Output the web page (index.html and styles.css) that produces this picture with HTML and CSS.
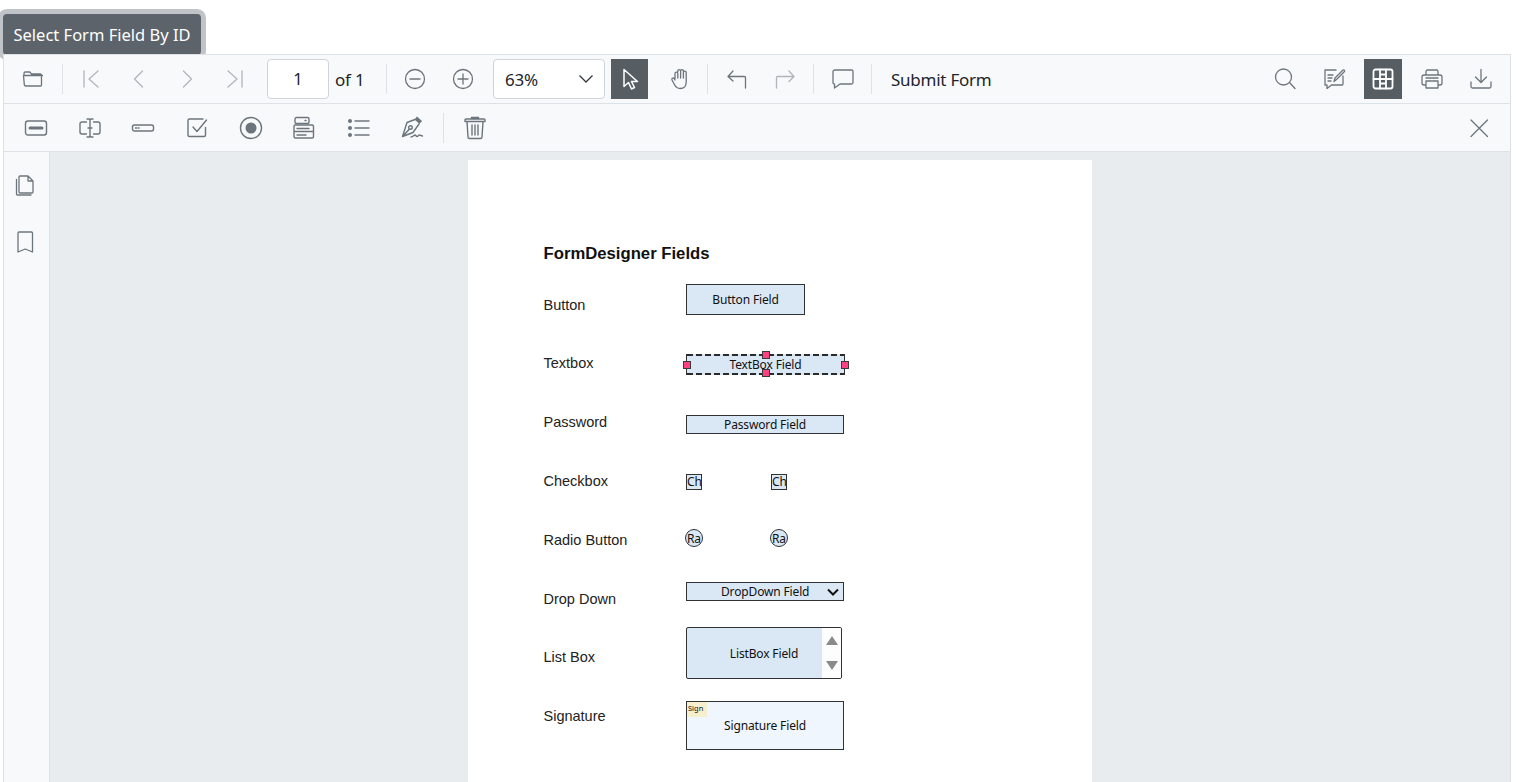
FILE: index.html
```html
<!DOCTYPE html>
<html lang="en">
<head>
<meta charset="utf-8">
<title>Form Designer</title>
<link rel="stylesheet" href="styles.css">
</head>
<body>
<div class="top"><button class="primary">Select Form Field By ID</button></div>
<div class="viewer">
  <div class="bar bar-main">
    <span class="tool first-tool"><svg viewBox="0 0 24 24"><path d="M3 8.500V6.200C3 5.500 3.500 5 4.200 5h4.600l1.700 2h8.800c.7 0 1.200.5 1.200 1.200v9.600c0 .7-.5 1.200-1.200 1.200H5c-1 0-1.600-.6-1.700-1.400L2.500 8.500h19"/></svg></span>
    <span class="sep"></span>
    <span class="tool off"><svg viewBox="0 0 24 24"><path d="M5 4v16M19 4l-9 8 9 8"/></svg></span>
    <span class="tool off"><svg viewBox="0 0 24 24"><path d="M15.500 4l-8 8 8 8"/></svg></span>
    <span class="tool off"><svg viewBox="0 0 24 24"><path d="M8.500 4l8 8-8 8"/></svg></span>
    <span class="tool off"><svg viewBox="0 0 24 24"><path d="M19 4v16M5 4l9 8-9 8"/></svg></span>
    <span class="page-input">1</span>
    <span class="of">of 1</span>
    <span class="sep"></span>
    <span class="tool"><svg viewBox="0 0 24 24"><circle cx="12" cy="12" r="9.500"/><path d="M7 12h10"/></svg></span>
    <span class="tool"><svg viewBox="0 0 24 24"><circle cx="12" cy="12" r="9.500"/><path d="M7 12h10M12 7v10"/></svg></span>
    <span class="zoom-select"><span>63%</span><svg viewBox="0 0 16 16"><path d="M1.500 4.500L8 11l6.500-6.500"/></svg></span>
    <span class="tool active pointer"><svg viewBox="0 0 24 24"><path d="M6 2.500v17l4.500-4 3 6.500 3-1.500-3-6h6z"/></svg></span>
    <span class="tool"><svg viewBox="0 0 24 24"><path d="M7 12V6.500a1.400 1.400 0 0 1 2.800 0V11m0-6.500V4a1.400 1.400 0 0 1 2.800 0v7m0-7a1.400 1.400 0 0 1 2.800 0v7m0-5.500a1.400 1.400 0 0 1 2.800 0V15c0 4-2.400 6.500-6 6.500-3 0-4.500-1.500-5.800-4L4 13c-.8-1.500 1.200-2.700 2.200-1.300L7 13"/></svg></span>
    <span class="sep sep-hand"></span>
    <span class="tool"><svg viewBox="0 0 24 24"><path d="M8 4L3 9.500 8 14M3 9.500h16.500c.6 0 1 .4 1 1V21"/></svg></span>
    <span class="tool off"><svg viewBox="0 0 24 24"><path d="M16 4l5 5.500-5 5M21 9.500H4.500c-.6 0-1 .4-1 1V21"/></svg></span>
    <span class="sep sep-left"></span>
    <span class="tool"><svg viewBox="0 0 24 24"><path d="M4 3h16.500c1 0 1.500.6 1.500 1.500v11c0 1-.5 1.500-1.500 1.500H9l-5.500 4V17c-1 0-1.500-.5-1.500-1.500v-11C2 3.600 2.800 3 4 3z"/></svg></span>
    <span class="sep sep-left"></span>
    <span class="submit">Submit Form</span>
    <span class="spacer"></span>
    <span class="tool"><svg viewBox="0 0 24 24"><circle cx="10.500" cy="10" r="8"/><path d="M16.500 15.500L22 21.500"/></svg></span>
    <span class="tool right"><svg viewBox="0 0 24 24"><path d="M14 3H3v15h2v3.500L9.500 18H20c.6 0 1-.4 1-1V9M6 8h5M6 11h4M6 14h3M12 14.500l1-3.500 8-8c1-.5 2 .5 1.500 1.500l-8 8z"/></svg></span>
    <span class="tool active grid-tool right"><svg viewBox="0 0 24 24"><rect x="2.500" y="2.500" width="19" height="19" rx="2"/><path d="M9 2.500v19M15 2.500v19M2.500 12h6.500M15 12h6.500M9 7.500h6M9 12h6M9 16.500h6"/></svg></span>
    <span class="tool right"><svg viewBox="0 0 24 24"><path d="M6 8V4.500C6 3.500 6.800 3 7.500 3h9c.9 0 1.500.6 1.500 1.500V8M6 18H4c-1.200 0-2-.8-2-2v-6c0-1.200.8-2 2-2h16c1.200 0 2 .8 2 2v6c0 1.200-.8 2-2 2h-2M6 14h12v7H6zM6 11h12"/></svg></span>
    <span class="tool right"><svg viewBox="0 0 24 24"><path d="M12 2.500V15M6.500 10l5.500 5.500 5.500-5.500M2 15v4.500c0 1 .6 1.500 1.500 1.500h17c1 0 1.500-.5 1.500-1.500V15"/></svg></span>
  </div>
  <div class="bar bar-form">
    <span class="form-tool"><svg viewBox="0 0 24 24"><rect x="1.500" y="5" width="21" height="14" rx="2.500"/><path class="thick" d="M6 12h12"/></svg></span>
    <span class="form-tool"><svg viewBox="0 0 24 24"><path d="M8.500 6H4C2.700 6 2 6.800 2 8v8c0 1.200.7 2 2 2h4.500M15.500 6H20c1.300 0 2 .8 2 2v8c0 1.200-.7 2-2 2h-4.500M9 3h2.200L12 4l.8-1H15M9 21h2.200l.8-1 .8 1H15M12 4v16M10 12h4"/></svg></span>
    <span class="form-tool"><svg viewBox="0 0 24 24"><rect x="1.500" y="9" width="21" height="6" rx="2"/><path d="M4.500 12h1M7 12h1"/></svg></span>
    <span class="form-tool"><svg viewBox="0 0 24 24"><path d="M20.500 11.500V19c0 1-.6 1.500-1.500 1.500H4.500c-1 0-1.500-.5-1.500-1.500V4.500C3 3.500 3.500 3 4.500 3H18M8 11l4 4.500L21.500 4"/></svg></span>
    <span class="form-tool"><svg viewBox="0 0 24 24"><circle cx="12" cy="12" r="10.500"/><circle class="solid" cx="12" cy="12" r="5.500"/></svg></span>
    <span class="form-tool"><svg viewBox="0 0 24 24"><rect x="3" y="1.500" width="14" height="6" rx="1.500"/><path d="M13 4.500h1M3 9h17c1 0 1.500.5 1.500 1.500v10c0 1-.5 1.500-1.500 1.500H3.500c-1 0-1.500-.5-1.500-1.500V10.500C2 9.500 2.500 9 3 9zM2 15.500h19.500M5 12.500h12M5 19h9"/></svg></span>
    <span class="form-tool"><svg viewBox="0 0 24 24"><circle class="solid" cx="4" cy="5" r="2"/><circle class="solid" cx="4" cy="12" r="2"/><circle class="solid" cx="4" cy="19" r="2"/><path d="M9 5h14M9 12h14M9 19h14"/></svg></span>
    <span class="form-tool"><svg viewBox="0 0 24 24"><path class="solid" d="M14.500 3.500L17 .5l5 4.500-2.500 3z"/><path d="M15 3.500L7 6.500 2.500 20.500l10.500-4 6-8.500M2.500 20.500l6.500-7M11 21c2 0 3-2 4-2s1 1.500 2 1.500 1.500-1.500 2.500-1.500 1.500 1 3 1"/><circle cx="10.500" cy="11.500" r="1.800"/></svg></span>
    <span class="sep sep-form"></span>
    <span class="form-tool trash"><svg viewBox="0 0 24 24"><path d="M2 5.500V4c0-.6.4-1 1-1h18c.6 0 1 .4 1 1v1.500H2zM8.500 3V1.500h7V3M4 5.500l1 15.500c0 .8.500 1.500 1.500 1.500h11c1 0 1.500-.7 1.500-1.500l1-15.500M9 9v10M12 9v10M15 9v10"/></svg></span>
    <span class="spacer"></span>
    <span class="close-tool"><svg viewBox="0 0 24 24"><path d="M4 4l16.500 16.500M20.500 4L4 20.500"/></svg></span>
  </div>
  <div class="body">
    <aside class="side">
      <svg viewBox="0 0 24 24"><path d="M7 3h8l5 5v11c0 .6-.4 1-1 1H7c-.6 0-1-.4-1-1V4c0-.6.4-1 1-1zM15 3v5h5M3.500 6.500V21c0 .6.400 1 1 1H18"/></svg>
      <svg viewBox="0 0 24 24"><path d="M6 2h12.500c.5 0 1 .5 1 1v19l-7.250-3L5 22V3c0-.5.500-1 1-1z"/></svg>
    </aside>
    <main class="stage">
      <section class="sheet">
        <h1 class="title">FormDesigner Fields</h1>
        <span class="label l-button">Button</span>
        <span class="label l-text">Textbox</span>
        <span class="label l-pass">Password</span>
        <span class="label l-check">Checkbox</span>
        <span class="label l-radio">Radio Button</span>
        <span class="label l-drop">Drop Down</span>
        <span class="label l-list">List Box</span>
        <span class="label l-sign">Signature</span>

        <div class="field f-button">Button Field</div>
        <div class="field f-text">TextBox Field</div>
        <i class="handle h-left"></i><i class="handle h-right"></i><i class="handle h-top"></i><i class="handle h-bottom"></i>
        <div class="field f-pass">Password Field</div>
        <div class="field f-check c1"><span>Ch</span></div>
        <div class="field f-check c2"><span>Ch</span></div>
        <div class="field f-radio r1"><span>Ra</span></div>
        <div class="field f-radio r2"><span>Ra</span></div>
        <div class="field f-drop"><span class="drop-text">DropDown Field</span><svg viewBox="0 0 12 8"><path d="M1 1.500L6 6.500l5-5"/></svg></div>
        <div class="field f-list">
          <span class="list-text">ListBox Field</span>
          <span class="scroll"><i class="arrow up"></i><i class="arrow down"></i></span>
        </div>
        <div class="field f-sign"><span class="sign-tag">Sign</span>Signature Field</div>
      </section>
    </main>
  </div>
</div>
</body>
</html>
```

FILE: styles.css
```css
* { box-sizing: border-box; }
html, body { margin: 0; height: 782px; overflow: hidden; background: #fff; }
body {
  display: flex;
  flex-direction: column;
  padding: 14px 5px 0 3px;
  font-family: "Noto Sans", "Open Sans", sans-serif;
  color: #212529;
}
.top { height: 40px; flex: none; }
.primary {
  display: block;
  width: 198px;
  height: 41px;
  padding: 0;
  border: 0;
  border-radius: 4px;
  background: #5c636a;
  color: #fff;
  font: 16.500px/40px "Noto Sans", sans-serif;
  box-shadow: 0 0 0 5px #c0c3c7;
}
.viewer {
  position: relative;
  flex: 1;
  min-height: 0;
  display: flex;
  flex-direction: column;
  border: 1px solid #dee2e6;
  border-bottom: 0;
  background: #f8f9fa;
}
.bar { flex: none; display: flex; align-items: center; border-bottom: 1px solid #dee2e6; }
.bar-main { height: 49px; gap: 10px; padding-left: 10px; padding-right: 10px; }
.bar-form { height: 48px; padding-left: 5px; padding-right: 19px; }
.spacer { flex: 1; }
.tool {
  flex: none;
  width: 38px;
  height: 40px;
  display: flex;
  align-items: center;
  justify-content: center;
}
.right { margin-left: 1px; }
.tool svg, .form-tool svg, .close-tool svg, .side svg {
  fill: none;
  stroke: #6c757d;
  stroke-width: 1.300;
  stroke-linecap: round;
  stroke-linejoin: round;
}
.tool svg { width: 24px; height: 24px; }
.off svg { opacity: .5; }
.active { background: #565e64; }
.active svg { stroke: #fff; }
.grid-tool svg { stroke-width: 1.800; }
.pointer { width: 37px; margin-left: -4px; margin-right: 3px; }
.pointer svg { fill: #565e64; stroke-width: 1.500; }
.sep { flex: none; width: 1px; height: 30px; margin-right: -1px; background: #dee2e6; }
.sep-hand { margin-left: -2px; margin-right: 0; }
.sep-left { margin-left: -1px; margin-right: 0; }
.page-input {
  flex: none;
  width: 62px;
  height: 40px;
  margin-left: 3px;
  border: 1px solid #ced4da;
  border-radius: 4px;
  background: #fff;
  font-size: 16.500px;
  line-height: 38px;
  text-align: center;
}
.of { flex: none; width: 41px; margin-left: -4px; font-size: 17px; letter-spacing: -0.2px; }
.zoom-select {
  flex: none;
  width: 112px;
  height: 40px;
  margin-left: 1px;
  padding: 0 10px 0 11px;
  display: flex;
  align-items: center;
  justify-content: space-between;
  border: 1px solid #ced4da;
  border-radius: 4px;
  background: #fff;
  font-size: 17px;
  letter-spacing: -0.2px;
}
.zoom-select svg { width: 16px; height: 16px; fill: none; stroke: #343a40; stroke-width: 1.300; }
.submit { flex: none; margin-left: 9px; font-size: 17px; letter-spacing: -0.25px; }
.form-tool {
  flex: none;
  width: 53.700px;
  height: 40px;
  display: flex;
  align-items: center;
  justify-content: center;
}
.form-tool svg { width: 24px; height: 24px; stroke-width: 1.400; }
.form-tool .thick { stroke-width: 3; }
.form-tool .solid { fill: #6c757d; stroke: none; }
.sep-form { margin-left: 4px; margin-right: 0; }
.trash { margin-left: 5px; }
.close-tool { flex: none; width: 24px; height: 24px; }
.close-tool svg { width: 24px; height: 24px; }
.body { flex: 1; min-height: 0; display: flex; }
.side {
  flex: none;
  width: 46px;
  padding: 21px 0 0 9px;
  display: flex;
  flex-direction: column;
  gap: 33px;
  border-right: 1px solid #dee2e6;
}
.side svg { width: 24px; height: 24px; }
.stage { flex: 1; min-width: 0; padding-top: 8px; background: #e9ecef; display: flex; justify-content: center; overflow: hidden; }
.sheet { position: relative; flex: none; width: 624px; height: 808px; background: #fff; color: #111; font-family: "Liberation Sans", Arial, sans-serif; }
.title { position: absolute; left: 75.500px; top: 84px; margin: 0; font-size: 16.700px; line-height: 20px; font-weight: 700; white-space: nowrap; }
.label { position: absolute; left: 75.500px; font-size: 14.500px; line-height: 18px; white-space: nowrap; color: #222; }
.l-button { top: 136px; }
.l-text { top: 194px; }
.l-pass { top: 253px; }
.l-check { top: 312px; }
.l-radio { top: 371px; }
.l-drop { top: 430px; }
.l-list { top: 488px; }
.l-sign { top: 547px; }
.field {
  position: absolute;
  display: flex;
  align-items: center;
  justify-content: center;
  border: 1px solid #303336;
  background: #dae8f6;
  color: #111;
  font: 12px "Noto Sans", sans-serif;
  letter-spacing: -0.15px;
  white-space: nowrap;
  overflow: hidden;
}
.f-button { left: 218px; top: 124px; width: 119px; height: 31px; }
.f-text { left: 218px; top: 194px; width: 159px; height: 21px; border-width: 0 1px; }
.f-text::before, .f-text::after {
  content: "";
  position: absolute;
  left: 0;
  right: 0;
  height: 2px;
  background: repeating-linear-gradient(90deg, #2a2a2a 0 6px, transparent 6px 9px);
}
.f-text::before { top: 0; }
.f-text::after { bottom: 0; }
.handle { position: absolute; width: 8px; height: 8px; border: 1px solid #3a3a3a; background: #ff4081; z-index: 2; }
.h-left { left: 215px; top: 201px; }
.h-right { left: 373px; top: 201px; }
.h-top { left: 294px; top: 191px; }
.h-bottom { left: 294px; top: 209px; }
.f-pass { left: 218px; top: 255px; width: 158px; height: 19px; }
.f-check { top: 314px; width: 16px; height: 16px; justify-content: flex-start; align-items: flex-end; }
.c1, .r1 { left: 218px; }
.c2, .r2 { left: 303px; }
.f-check span { line-height: 14px; }
.f-radio { top: 369px; width: 18px; height: 18px; border-radius: 50%; justify-content: flex-start; }
.r1 { left: 217px; }
.r2 { left: 302px; }
.f-radio span { margin-left: 1px; }
.f-drop { left: 218px; top: 422px; width: 158px; height: 19px; justify-content: flex-start; padding-left: 34px; }
.f-drop svg { width: 12px; height: 8px; margin-left: 18px; fill: none; stroke: #111; stroke-width: 2; }
.f-list { left: 218px; top: 467px; width: 156px; height: 52px; border-radius: 2px; justify-content: flex-start; }
.list-text { flex: 1; text-align: center; padding-left: 19px; }
.scroll { flex: none; width: 19px; height: 100%; background: #fdfdfd; display: flex; flex-direction: column; align-items: center; justify-content: space-between; padding: 8px 0; }
.arrow { width: 0; height: 0; border-left: 6px solid transparent; border-right: 6px solid transparent; }
.up { border-bottom: 9px solid #8a8a8a; }
.down { border-top: 9px solid #8a8a8a; }
.f-sign { left: 218px; top: 541px; width: 158px; height: 49px; background: #f0f6fd; }
.sign-tag { position: absolute; left: 0; top: 0; width: 20px; height: 15px; padding-left: 1px; background: #f6efcd; font-size: 7.500px; line-height: 13px; letter-spacing: 0; }
```
